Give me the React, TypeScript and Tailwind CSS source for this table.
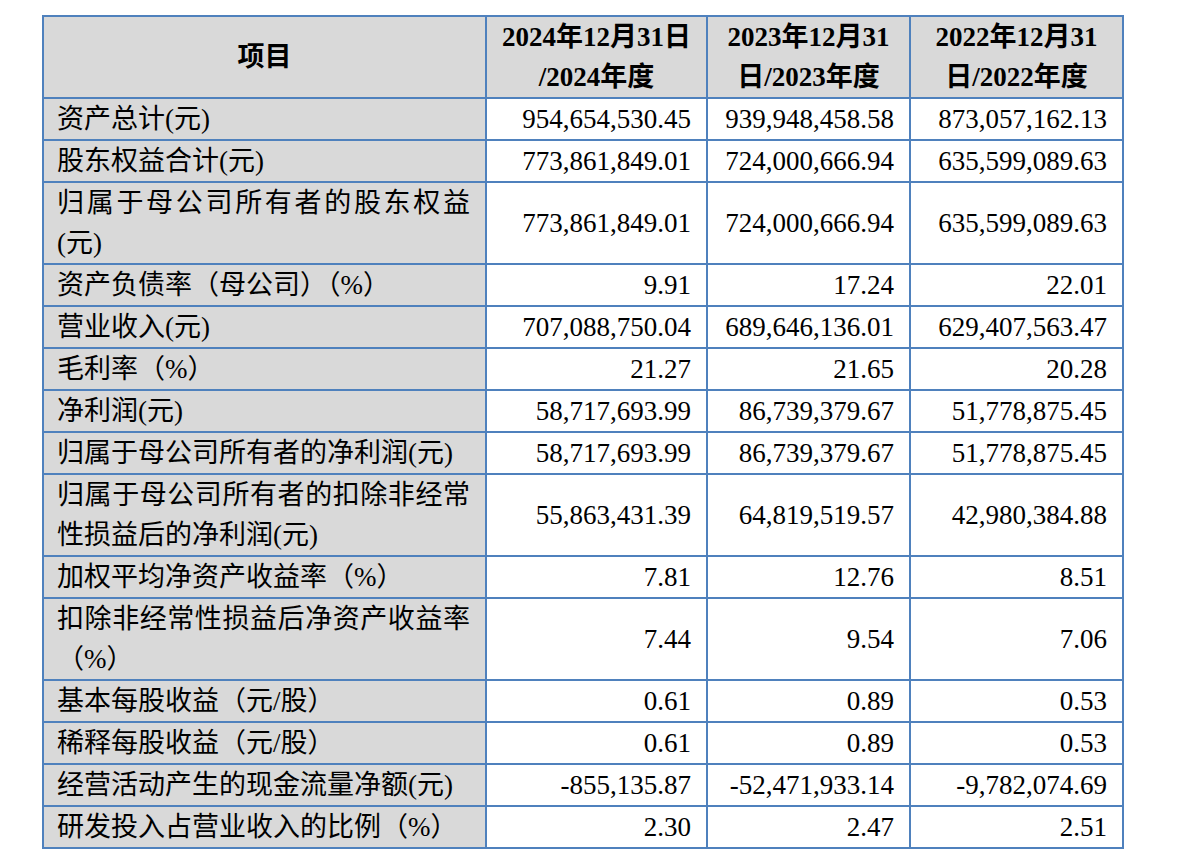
import React from "react"

type Row = {
  label: string[]
  values: [string, string, string]
  tall?: boolean
}

const rows: Row[] = [
  { label: ["资产总计(元)"], values: ["954,654,530.45", "939,948,458.58", "873,057,162.13"] },
  { label: ["股东权益合计(元)"], values: ["773,861,849.01", "724,000,666.94", "635,599,089.63"] },
  {
    label: ["归属于母公司所有者的股东权益", "(元)"],
    values: ["773,861,849.01", "724,000,666.94", "635,599,089.63"],
    tall: true,
  },
  { label: ["资产负债率（母公司）（%）"], values: ["9.91", "17.24", "22.01"] },
  { label: ["营业收入(元)"], values: ["707,088,750.04", "689,646,136.01", "629,407,563.47"] },
  { label: ["毛利率（%）"], values: ["21.27", "21.65", "20.28"] },
  { label: ["净利润(元)"], values: ["58,717,693.99", "86,739,379.67", "51,778,875.45"] },
  { label: ["归属于母公司所有者的净利润(元)"], values: ["58,717,693.99", "86,739,379.67", "51,778,875.45"] },
  {
    label: ["归属于母公司所有者的扣除非经常", "性损益后的净利润(元)"],
    values: ["55,863,431.39", "64,819,519.57", "42,980,384.88"],
    tall: true,
  },
  { label: ["加权平均净资产收益率（%）"], values: ["7.81", "12.76", "8.51"] },
  {
    label: ["扣除非经常性损益后净资产收益率", "（%）"],
    values: ["7.44", "9.54", "7.06"],
    tall: true,
  },
  { label: ["基本每股收益（元/股）"], values: ["0.61", "0.89", "0.53"] },
  { label: ["稀释每股收益（元/股）"], values: ["0.61", "0.89", "0.53"] },
  { label: ["经营活动产生的现金流量净额(元)"], values: ["-855,135.87", "-52,471,933.14", "-9,782,074.69"] },
  { label: ["研发投入占营业收入的比例（%）"], values: ["2.30", "2.47", "2.51"] },
]

const headers = [
  ["2024年12月31日", "/2024年度"],
  ["2023年12月31", "日/2023年度"],
  ["2022年12月31", "日/2022年度"],
]

export default function App() {
  return (
    <div
      className="w-[1178px] h-[868px] bg-white text-black text-[27px] leading-[40px]"
      style={{ fontFamily: '"Liberation Serif", "Noto Sans CJK SC", serif' }}
    >
      <div className="ml-[42px] pt-[15px]">
        <div className="grid w-max grid-cols-[441px_219px_201px_211px] gap-[2px] bg-[#4f81bd] p-[2px]">
          {/* 表头 */}
          <div className="flex h-[80px] items-center justify-center bg-[#d9d9d9] font-bold">项目</div>
          {headers.map((h, i) => (
            <div
              key={i}
              className="flex h-[80px] flex-col items-center justify-center whitespace-nowrap bg-[#d9d9d9] font-bold"
            >
              <span>{h[0]}</span>
              <span>{h[1]}</span>
            </div>
          ))}

          {rows.map((r, i) => (
            <React.Fragment key={i}>
              <div
                className={`flex flex-col justify-center whitespace-nowrap bg-[#d9d9d9] pl-[13px] pr-[15px] ${
                  r.tall ? "h-[80px]" : "h-[40px]"
                }`}
              >
                {r.label.map((l, j) =>
                  r.tall && j === 0 ? (
                    // 折行的首行两端对齐
                    <span key={j} className="block text-justify [text-align-last:justify]">
                      {l}
                    </span>
                  ) : (
                    <span key={j}>{l}</span>
                  )
                )}
              </div>
              {r.values.map((v, j) => (
                <div
                  key={j}
                  className={`flex items-center justify-end whitespace-nowrap bg-white pr-[15px] ${
                    r.tall ? "h-[80px]" : "h-[40px]"
                  }`}
                >
                  {v}
                </div>
              ))}
            </React.Fragment>
          ))}
        </div>
      </div>
    </div>
  )
}
